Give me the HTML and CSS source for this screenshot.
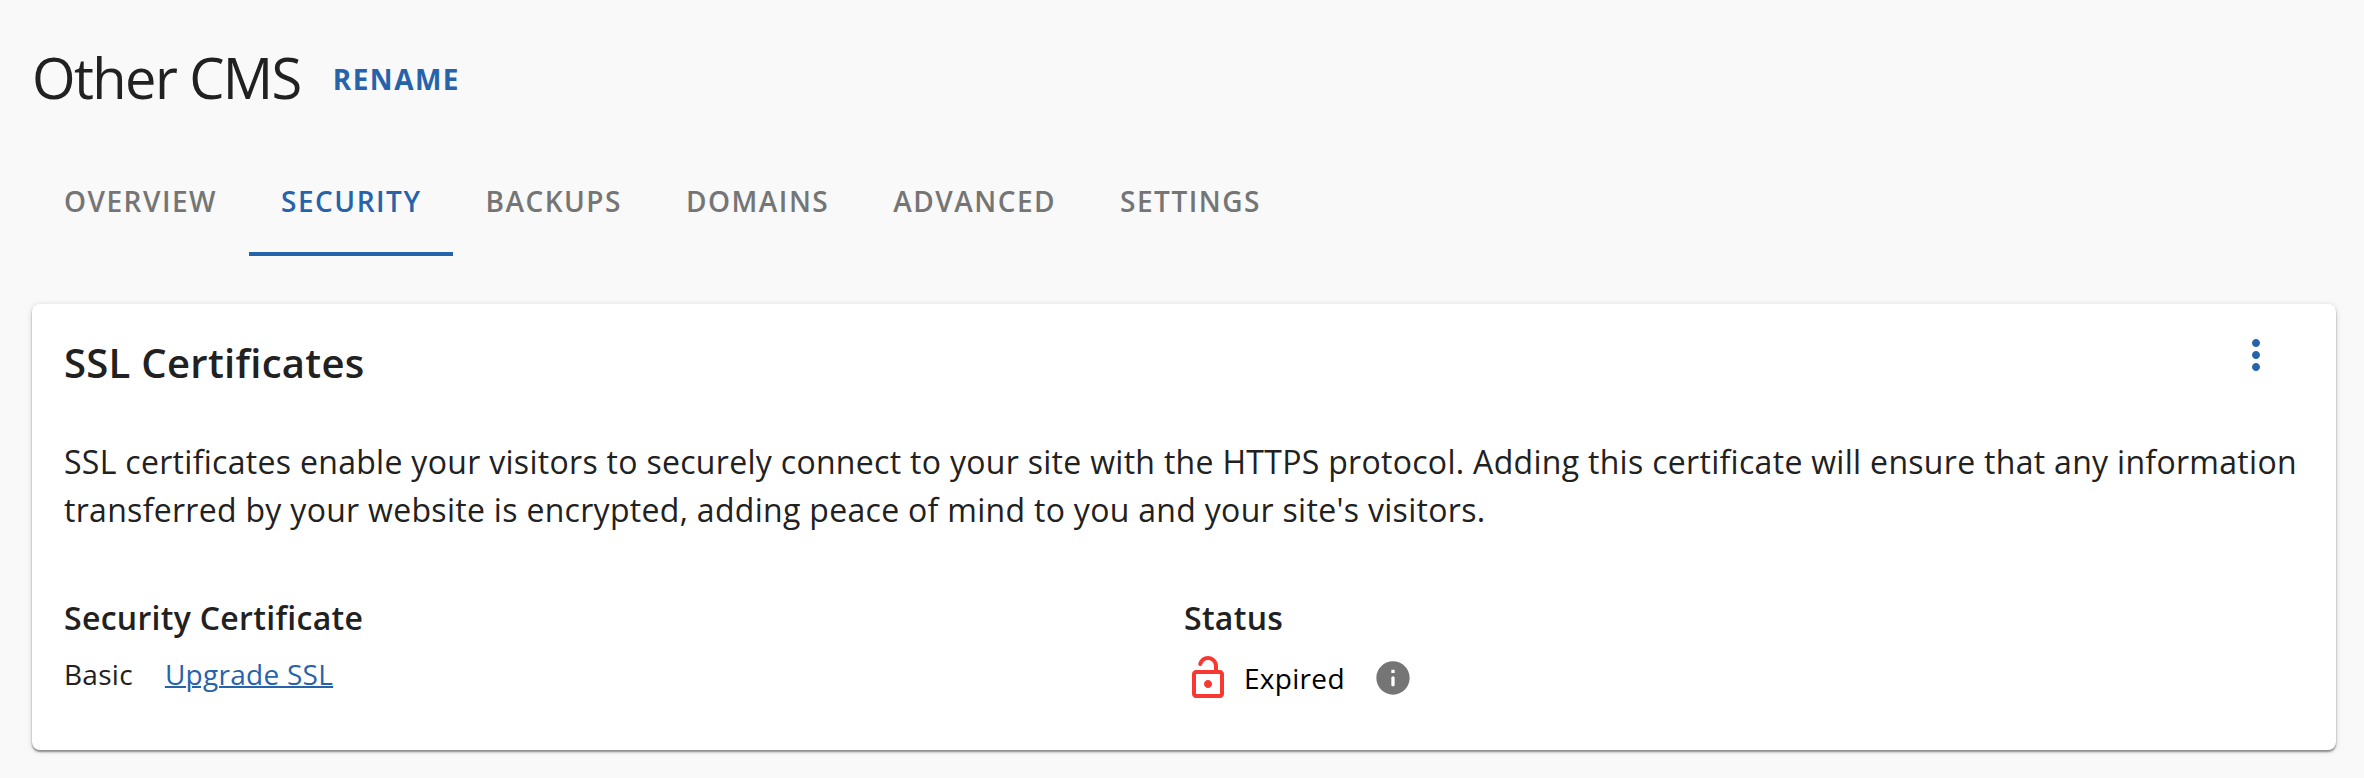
FILE: index.html
```
<!DOCTYPE html>
<html lang="en"><head><meta charset="utf-8"><title>Other CMS</title><link rel="stylesheet" href="styles.css"></head>
<body>
<header class="page-header"><h1>Other CMS</h1><a class="rename">RENAME</a></header>
<nav class="tabs"><a class="tab">OVERVIEW</a><a class="tab active">SECURITY</a><a class="tab">BACKUPS</a><a class="tab">DOMAINS</a><a class="tab">ADVANCED</a><a class="tab">SETTINGS</a></nav>
<main class="card">
<div class="card-head"><h2>SSL Certificates</h2><svg class="more" viewBox="0 0 24 24"><path d="M12 8c1.1 0 2-.9 2-2s-.9-2-2-2-2 .9-2 2 .9 2 2 2zm0 2c-1.1 0-2 .9-2 2s.9 2 2 2 2-.9 2-2-.9-2-2-2zm0 6c-1.1 0-2 .9-2 2s.9 2 2 2 2-.9 2-2-.9-2-2-2z"/></svg></div>
<p class="desc">SSL certificates enable your visitors to securely connect to your site with the HTTPS protocol. Adding this certificate will ensure that any information<br>transferred by your website is encrypted, adding peace of mind to you and your site's visitors.</p>
<div class="grid">
<section><h3>Security Certificate</h3><div class="plan"><span>Basic</span><a class="upgrade">Upgrade SSL</a></div></section>
<section><h3>Status</h3><div class="status"><svg class="lock" viewBox="0 0 24 24"><path d="M12 17c1.1 0 2-.9 2-2s-.9-2-2-2-2 .9-2 2 .9 2 2 2zm6-9h-1V6c0-2.76-2.24-5-5-5-2.28 0-4.27 1.54-4.84 3.75-.14.54.18 1.08.72 1.22.53.14 1.08-.18 1.22-.72C9.44 3.93 10.63 3 12 3c1.65 0 3 1.35 3 3v2H6c-1.1 0-2 .9-2 2v10c0 1.1.9 2 2 2h12c1.1 0 2-.9 2-2V10c0-1.1-.9-2-2-2zm0 12H6V10h12v10z"/></svg><span class="expired">Expired</span><svg class="info" viewBox="0 0 24 24"><path d="M12 2C6.480 2 2 6.480 2 12s4.480 10 10 10 10-4.480 10-10S17.520 2 12 2zm0 15c-.55 0-1-.45-1-1v-4c0-.55.45-1 1-1s1 .45 1 1v4c0 .55-.45 1-1 1zm1-8h-2V7h2v2z"/></svg></div></section>
</div>
</main>
</body></html>
```
FILE: styles.css
```
* { box-sizing: border-box; }
body { margin: 0; background: #f9f9f9; color: #212121; font-family: "Open Sans", sans-serif; height: 778px; overflow: hidden; }
h1, h2, h3, p { margin: 0; }
.page-header { display: flex; align-items: center; height: 148px; padding: 5px 0 0 32px; gap: 32px; }
h1 { font-size: 56px; font-weight: 400; letter-spacing: -1.6px; }
.rename { color: #2763aa; font-size: 28px; font-weight: 700; letter-spacing: 1.5px; padding-top: 4px; }
.tabs { display: flex; height: 108px; padding-left: 32px; }
.tab { height: 108px; padding: 0 32px; line-height: 107px; font-size: 28px; font-weight: 600; letter-spacing: 1.5px; color: #757575; }
.tab.active { color: #2763aa; border-bottom: 4px solid #2763aa; }
.card { margin: 48px 28px 0 32px; height: 446px; border-radius: 8px; background: #fff; box-shadow: 0 2px 2px rgba(0,0,0,.4), 0 1px 6px rgba(0,0,0,.14); padding: 0 32px; }
.card-head { display: flex; justify-content: space-between; height: 117px; padding-right: 24px; }
h2 { font-size: 40px; font-weight: 600; line-height: 118px; letter-spacing: .3px; }
.more { width: 48px; height: 48px; margin-top: 27px; fill: #2763aa; }
.desc { font-size: 32px; line-height: 48px; padding-top: 17px; white-space: nowrap; letter-spacing: .3px; }
.grid { display: grid; grid-template-columns: 1120px 1fr; margin-top: 60px; }
h3 { font-size: 32px; font-weight: 600; line-height: 48px; letter-spacing: .3px; }
.plan { display: flex; gap: 32px; font-size: 28px; line-height: 40px; margin-top: 12px; letter-spacing: .28px; }
.upgrade { color: #2763aa; text-decoration: underline; text-decoration-thickness: 2px; }
.status { display: flex; align-items: center; height: 48px; margin-top: 12px; font-size: 28px; color: #000; letter-spacing: .3px; }
.lock { width: 48px; height: 48px; fill: #f93832; }
.expired { margin: 0 28px 0 12px; }
.info { width: 40px; height: 40px; fill: #757575; }
```
